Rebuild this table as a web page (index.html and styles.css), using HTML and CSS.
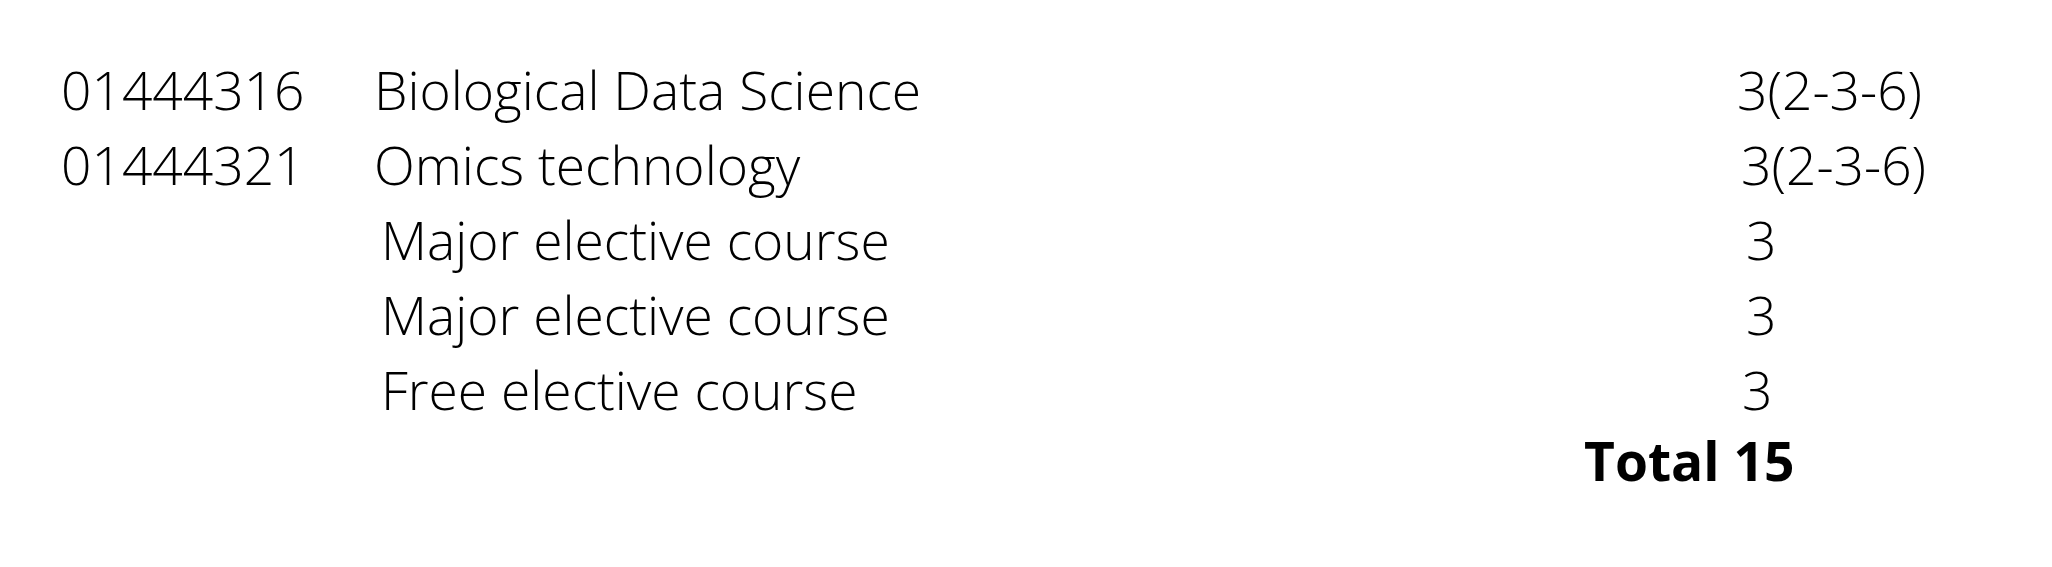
FILE: index.html
```html
<!DOCTYPE html>
<html lang="en">
<head>
<meta charset="utf-8">
<title>Courses</title>
<link rel="stylesheet" href="styles.css">
</head>
<body>
<div class="courses">
  <div class="row">
    <span class="code">01444316</span>
    <span class="title">Biological Data Science</span>
    <span class="credit">3(2-3-6)</span>
  </div>
  <div class="row">
    <span class="code">01444321</span>
    <span class="title">Omics technology</span>
    <span class="credit shift-s">3(2-3-6)</span>
  </div>
  <div class="row">
    <span class="code"></span>
    <span class="title indent">Major elective course</span>
    <span class="credit shift-l">3</span>
  </div>
  <div class="row">
    <span class="code"></span>
    <span class="title indent">Major elective course</span>
    <span class="credit shift-l">3</span>
  </div>
  <div class="row">
    <span class="code"></span>
    <span class="title indent">Free elective course</span>
    <span class="credit shift-m">3</span>
  </div>
  <div class="total-row">
    <span class="total">Total 15</span>
  </div>
</div>
</body>
</html>
```

FILE: styles.css
```css
html, body {
  margin: 0;
  padding: 0;
  background: #ffffff;
}

body {
  font-family: "Open Sans", "Noto Sans", sans-serif;
  color: #000000;
}

.courses {
  padding: 52px 0 0 61px;
}

.row {
  display: grid;
  grid-template-columns: 313px 1363px auto;
  font-size: 53.33px;
  font-weight: 300;
  line-height: 75px;
  white-space: nowrap;
}

.indent {
  padding-left: 7px;
}

.shift-s {
  padding-left: 4px;
}

.shift-m {
  padding-left: 5px;
}

.shift-l {
  padding-left: 9px;
}

.total-row {
  display: flex;
  padding-left: 1523px;
  font-size: 53.33px;
  line-height: 75px;
  margin-top: -4px;
}

.total {
  font-weight: 700;
}
```
